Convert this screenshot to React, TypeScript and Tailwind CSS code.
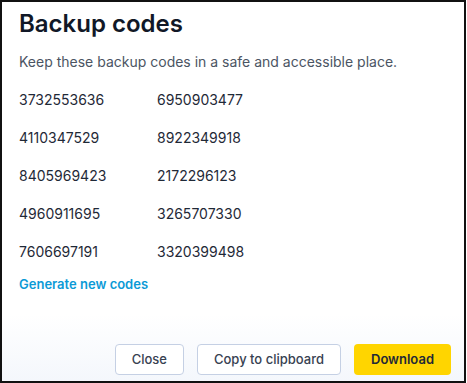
const codes: [string, string][] = [
  ["3732553636", "6950903477"],
  ["4110347529", "8922349918"],
  ["8405969423", "2172296123"],
  ["4960911695", "3265707330"],
  ["7606697191", "3320399498"],
];

export default function App() {
  return (
    <div
      className="w-[466px] h-[383px] border-2 border-[#111] bg-white flex flex-col overflow-hidden"
      style={{ fontFamily: "Inter, 'Noto Sans', sans-serif" }}
    >
      {/* Body */}
      <div className="flex-1 px-[17px] pt-[6px]">
        <h2 className="text-2xl leading-8 font-semibold text-[#111827]">Backup codes</h2>
        <p className="mt-3 text-sm leading-5 text-[#4b5563]">
          Keep these backup codes in a safe and accessible place.
        </p>
        <div className="mt-[18px] flex flex-col gap-[18px]">
          {codes.map(([a, b]) => (
            <div key={a} className="flex text-sm leading-5 text-[#1f2937]">
              <span className="w-[138px]">{a}</span>
              <span>{b}</span>
            </div>
          ))}
        </div>
        <button className="mt-3 text-[13px] leading-5 font-semibold text-[#0b9ad6]">
          Generate new codes
        </button>
      </div>

      {/* Footer */}
      <div className="bg-linear-to-b from-white to-[#f4f7fc] pt-[30px] pb-[6px] pr-[13px] flex justify-end gap-[13px]">
        <button className="h-[31px] px-[16px] rounded-[4px] border border-[#c5d0e4] bg-white text-[13px] font-medium text-[#374151]">
          Close
        </button>
        <button className="h-[31px] px-[16px] rounded-[4px] border border-[#c5d0e4] bg-white text-[13px] font-medium text-[#374151]">
          Copy to clipboard
        </button>
        <button className="h-[31px] w-[97px] rounded-[4px] bg-[#ffd500] text-[13px] font-semibold text-[#1f2937]">
          Download
        </button>
      </div>
    </div>
  );
}
